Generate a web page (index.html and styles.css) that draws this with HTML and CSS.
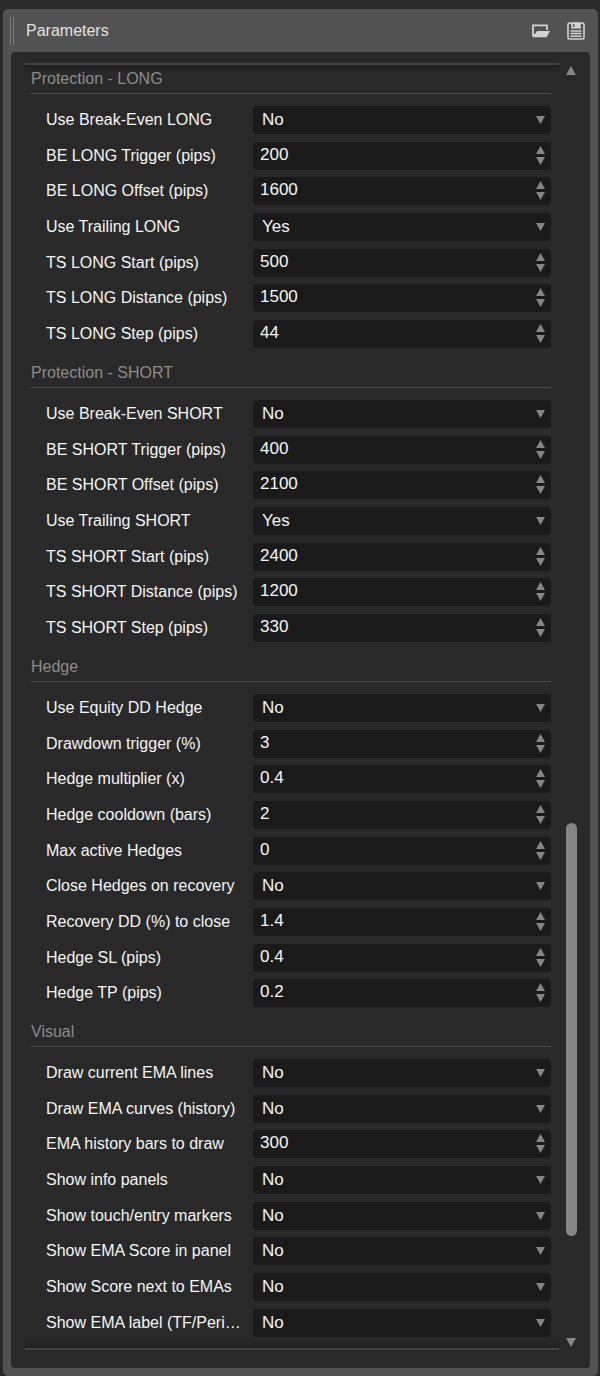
FILE: index.html
```html
<!DOCTYPE html>
<html lang="en">
<head>
<meta charset="utf-8">
<meta name="viewport" content="width=device-width, initial-scale=1">
<title>Parameters</title>
<link rel="stylesheet" href="styles.css">
</head>
<body>
<main class="panel">
  <header class="panel-header">
    <span class="grip"></span>
    <h1 class="panel-title">Parameters</h1>
    <button class="icon-button" type="button" aria-label="Open">
      <svg width="20" height="18" viewBox="0 0 20 18"><path d="M2 14V3.4h14V8" fill="none" stroke="#d2d2d2" stroke-width="1.8"/><path d="M1.2 15.2L6.2 9H19l-3.4 6.2z" fill="#d2d2d2"/></svg>
    </button>
    <button class="icon-button" type="button" aria-label="Save">
      <svg width="18" height="18" viewBox="0 0 18 18"><rect x="1" y="1" width="16" height="16" rx="1.5" fill="none" stroke="#d2d2d2" stroke-width="1.6"/><path d="M4.2 1h9.6v5.6H4.2z" fill="#d2d2d2"/><path d="M6 2h1.4v3H6z" fill="#525252"/><path d="M3.5 9h11M3.5 11.6h11M3.5 14.2h11" stroke="#d2d2d2" stroke-width="1.5"/></svg>
    </button>
  </header>
  <div class="panel-body">
    <form class="list">
      <section class="group">
        <h2 class="group-title">Protection - LONG</h2>
        <div class="row"><label for="a1">Use Break-Even LONG</label><div class="field choice"><select id="a1"><option>No</option><option>Yes</option></select></div></div>
        <div class="row"><label for="a2">BE LONG Trigger (pips)</label><div class="field"><input id="a2" type="number" value="200"><button class="up" type="button" aria-label="Increase"></button><button class="down" type="button" aria-label="Decrease"></button></div></div>
        <div class="row"><label for="a3">BE LONG Offset (pips)</label><div class="field"><input id="a3" type="number" value="1600"><button class="up" type="button" aria-label="Increase"></button><button class="down" type="button" aria-label="Decrease"></button></div></div>
        <div class="row"><label for="a4">Use Trailing LONG</label><div class="field choice"><select id="a4"><option>Yes</option><option>No</option></select></div></div>
        <div class="row"><label for="a5">TS LONG Start (pips)</label><div class="field"><input id="a5" type="number" value="500"><button class="up" type="button" aria-label="Increase"></button><button class="down" type="button" aria-label="Decrease"></button></div></div>
        <div class="row"><label for="a6">TS LONG Distance (pips)</label><div class="field"><input id="a6" type="number" value="1500"><button class="up" type="button" aria-label="Increase"></button><button class="down" type="button" aria-label="Decrease"></button></div></div>
        <div class="row"><label for="a7">TS LONG Step (pips)</label><div class="field"><input id="a7" type="number" value="44"><button class="up" type="button" aria-label="Increase"></button><button class="down" type="button" aria-label="Decrease"></button></div></div>
      </section>
      <section class="group">
        <h2 class="group-title">Protection - SHORT</h2>
        <div class="row"><label for="b1">Use Break-Even SHORT</label><div class="field choice"><select id="b1"><option>No</option><option>Yes</option></select></div></div>
        <div class="row"><label for="b2">BE SHORT Trigger (pips)</label><div class="field"><input id="b2" type="number" value="400"><button class="up" type="button" aria-label="Increase"></button><button class="down" type="button" aria-label="Decrease"></button></div></div>
        <div class="row"><label for="b3">BE SHORT Offset (pips)</label><div class="field"><input id="b3" type="number" value="2100"><button class="up" type="button" aria-label="Increase"></button><button class="down" type="button" aria-label="Decrease"></button></div></div>
        <div class="row"><label for="b4">Use Trailing SHORT</label><div class="field choice"><select id="b4"><option>Yes</option><option>No</option></select></div></div>
        <div class="row"><label for="b5">TS SHORT Start (pips)</label><div class="field"><input id="b5" type="number" value="2400"><button class="up" type="button" aria-label="Increase"></button><button class="down" type="button" aria-label="Decrease"></button></div></div>
        <div class="row"><label for="b6">TS SHORT Distance (pips)</label><div class="field"><input id="b6" type="number" value="1200"><button class="up" type="button" aria-label="Increase"></button><button class="down" type="button" aria-label="Decrease"></button></div></div>
        <div class="row"><label for="b7">TS SHORT Step (pips)</label><div class="field"><input id="b7" type="number" value="330"><button class="up" type="button" aria-label="Increase"></button><button class="down" type="button" aria-label="Decrease"></button></div></div>
      </section>
      <section class="group">
        <h2 class="group-title">Hedge</h2>
        <div class="row"><label for="c1">Use Equity DD Hedge</label><div class="field choice"><select id="c1"><option>No</option><option>Yes</option></select></div></div>
        <div class="row"><label for="c2">Drawdown trigger (%)</label><div class="field"><input id="c2" type="number" value="3"><button class="up" type="button" aria-label="Increase"></button><button class="down" type="button" aria-label="Decrease"></button></div></div>
        <div class="row"><label for="c3">Hedge multiplier (x)</label><div class="field"><input id="c3" type="number" step="0.1" value="0.4"><button class="up" type="button" aria-label="Increase"></button><button class="down" type="button" aria-label="Decrease"></button></div></div>
        <div class="row"><label for="c4">Hedge cooldown (bars)</label><div class="field"><input id="c4" type="number" value="2"><button class="up" type="button" aria-label="Increase"></button><button class="down" type="button" aria-label="Decrease"></button></div></div>
        <div class="row"><label for="c5">Max active Hedges</label><div class="field"><input id="c5" type="number" value="0"><button class="up" type="button" aria-label="Increase"></button><button class="down" type="button" aria-label="Decrease"></button></div></div>
        <div class="row"><label for="c6">Close Hedges on recovery</label><div class="field choice"><select id="c6"><option>No</option><option>Yes</option></select></div></div>
        <div class="row"><label for="c7">Recovery DD (%) to close</label><div class="field"><input id="c7" type="number" step="0.1" value="1.4"><button class="up" type="button" aria-label="Increase"></button><button class="down" type="button" aria-label="Decrease"></button></div></div>
        <div class="row"><label for="c8">Hedge SL (pips)</label><div class="field"><input id="c8" type="number" step="0.1" value="0.4"><button class="up" type="button" aria-label="Increase"></button><button class="down" type="button" aria-label="Decrease"></button></div></div>
        <div class="row"><label for="c9">Hedge TP (pips)</label><div class="field"><input id="c9" type="number" step="0.1" value="0.2"><button class="up" type="button" aria-label="Increase"></button><button class="down" type="button" aria-label="Decrease"></button></div></div>
      </section>
      <section class="group">
        <h2 class="group-title">Visual</h2>
        <div class="row"><label for="d1">Draw current EMA lines</label><div class="field choice"><select id="d1"><option>No</option><option>Yes</option></select></div></div>
        <div class="row"><label for="d2">Draw EMA curves (history)</label><div class="field choice"><select id="d2"><option>No</option><option>Yes</option></select></div></div>
        <div class="row"><label for="d3">EMA history bars to draw</label><div class="field"><input id="d3" type="number" value="300"><button class="up" type="button" aria-label="Increase"></button><button class="down" type="button" aria-label="Decrease"></button></div></div>
        <div class="row"><label for="d4">Show info panels</label><div class="field choice"><select id="d4"><option>No</option><option>Yes</option></select></div></div>
        <div class="row"><label for="d5">Show touch/entry markers</label><div class="field choice"><select id="d5"><option>No</option><option>Yes</option></select></div></div>
        <div class="row"><label for="d6">Show EMA Score in panel</label><div class="field choice"><select id="d6"><option>No</option><option>Yes</option></select></div></div>
        <div class="row"><label for="d7">Show Score next to EMAs</label><div class="field choice"><select id="d7"><option>No</option><option>Yes</option></select></div></div>
        <div class="row"><label for="d8">Show EMA label (TF/Peri…</label><div class="field choice"><select id="d8"><option>No</option><option>Yes</option></select></div></div>
      </section>
    </form>
    <div class="scrollbar">
      <button class="scroll-arrow up" type="button" aria-label="Scroll up"></button>
      <div class="track"><div class="thumb"></div></div>
      <button class="scroll-arrow down" type="button" aria-label="Scroll down"></button>
    </div>
  </div>
</main>
</body>
</html>
```
FILE: styles.css
```css
* {
  box-sizing: border-box;
}

body {
  margin: 0;
  padding: 9px 2px 0 3px;
  background: #292929;
  color: #f5f5f5;
  font: 16px/20px "Liberation Sans", Arial, sans-serif;
}

button {
  border: 0;
  padding: 0;
  background: none;
}

.panel {
  padding: 0 8px 8px;
  border-radius: 5px;
  background: #525252;
}

.panel-header {
  display: flex;
  align-items: center;
  height: 43px;
  padding-right: 5px;
}

.grip {
  width: 4px;
  height: 28px;
  margin: 0 12px 0 -1px;
  border: solid #7e7e7e;
  border-width: 0 1px;
}

.panel-title {
  flex: 1;
  margin: 0;
  font-size: 16px;
  font-weight: 400;
  color: #e2e2e2;
}

.icon-button {
  display: flex;
  margin-left: 16px;
}

.panel-body {
  display: flex;
  gap: 6px;
  padding: 11px 13px 18px 14px;
  border-radius: 4px;
  background: #292929;
}

.list {
  flex: 1;
  min-width: 0;
  padding: 4px 8px 11px 6px;
  border-top: 2px solid #434343;
  border-bottom: 2px solid #434343;
  background:
    linear-gradient(#202020, #292929) top / 100% 8px no-repeat,
    linear-gradient(#292929, #202020) bottom / 100% 8px no-repeat;
}

.group + .group {
  margin-top: 15px;
}

.group-title {
  margin: 0 0 12px;
  padding-bottom: 4px;
  border-bottom: 1px solid #4a4a4a;
  font-size: 16px;
  font-weight: 400;
  color: #8c8c8c;
}

.row {
  display: grid;
  grid-template-columns: 199px 1fr;
  gap: 8px;
  align-items: center;
  margin-bottom: 8px;
  padding-left: 15px;
}

.row:nth-child(3n) {
  margin-bottom: 7px;
}

.row:last-child {
  margin-bottom: 0;
}

.row label {
  white-space: nowrap;
}

.field {
  display: grid;
  grid-template-columns: 1fr 9px;
  grid-template-rows: 1fr 1fr;
  row-gap: 3px;
  height: 28px;
  padding: 4px 6px 5px 7px;
  border-radius: 4px;
  background: #1a1a1a;
}

.field input,
.field select {
  grid-row: 1 / 3;
  width: 100%;
  min-width: 0;
  height: 18px;
  margin: 0;
  border: 0;
  padding: 0;
  outline: 0;
  appearance: none;
  background: none;
  color: inherit;
  font: 17px/18px "Liberation Sans", Arial, sans-serif;
}

.field input {
  appearance: textfield;
}

.field input::-webkit-inner-spin-button {
  appearance: none;
}

.field.choice {
  padding: 5px 6px 5px 9px;
}

.choice::after {
  content: "";
  grid-row: 1 / 3;
  grid-column: 2;
  align-self: center;
  height: 8px;
}

.up,
.down,
.choice::after {
  background: #868686;
}

.up {
  clip-path: polygon(50% 0, 100% 100%, 0 100%);
}

.down,
.choice::after {
  clip-path: polygon(0 0, 100% 0, 50% 100%);
}

.field .up,
.field .down {
  grid-column: 2;
}

.scrollbar {
  display: flex;
  flex-direction: column;
  align-items: center;
  width: 12px;
  padding: 3px 0;
}

.scroll-arrow {
  width: 10px;
  height: 9px;
}

.track {
  flex: 1;
  width: 11px;
  display: grid;
  grid-template-rows: 748fr 413fr 102fr;
}

.thumb {
  grid-row: 2;
  border-radius: 6px;
  background: #868686;
}
```
